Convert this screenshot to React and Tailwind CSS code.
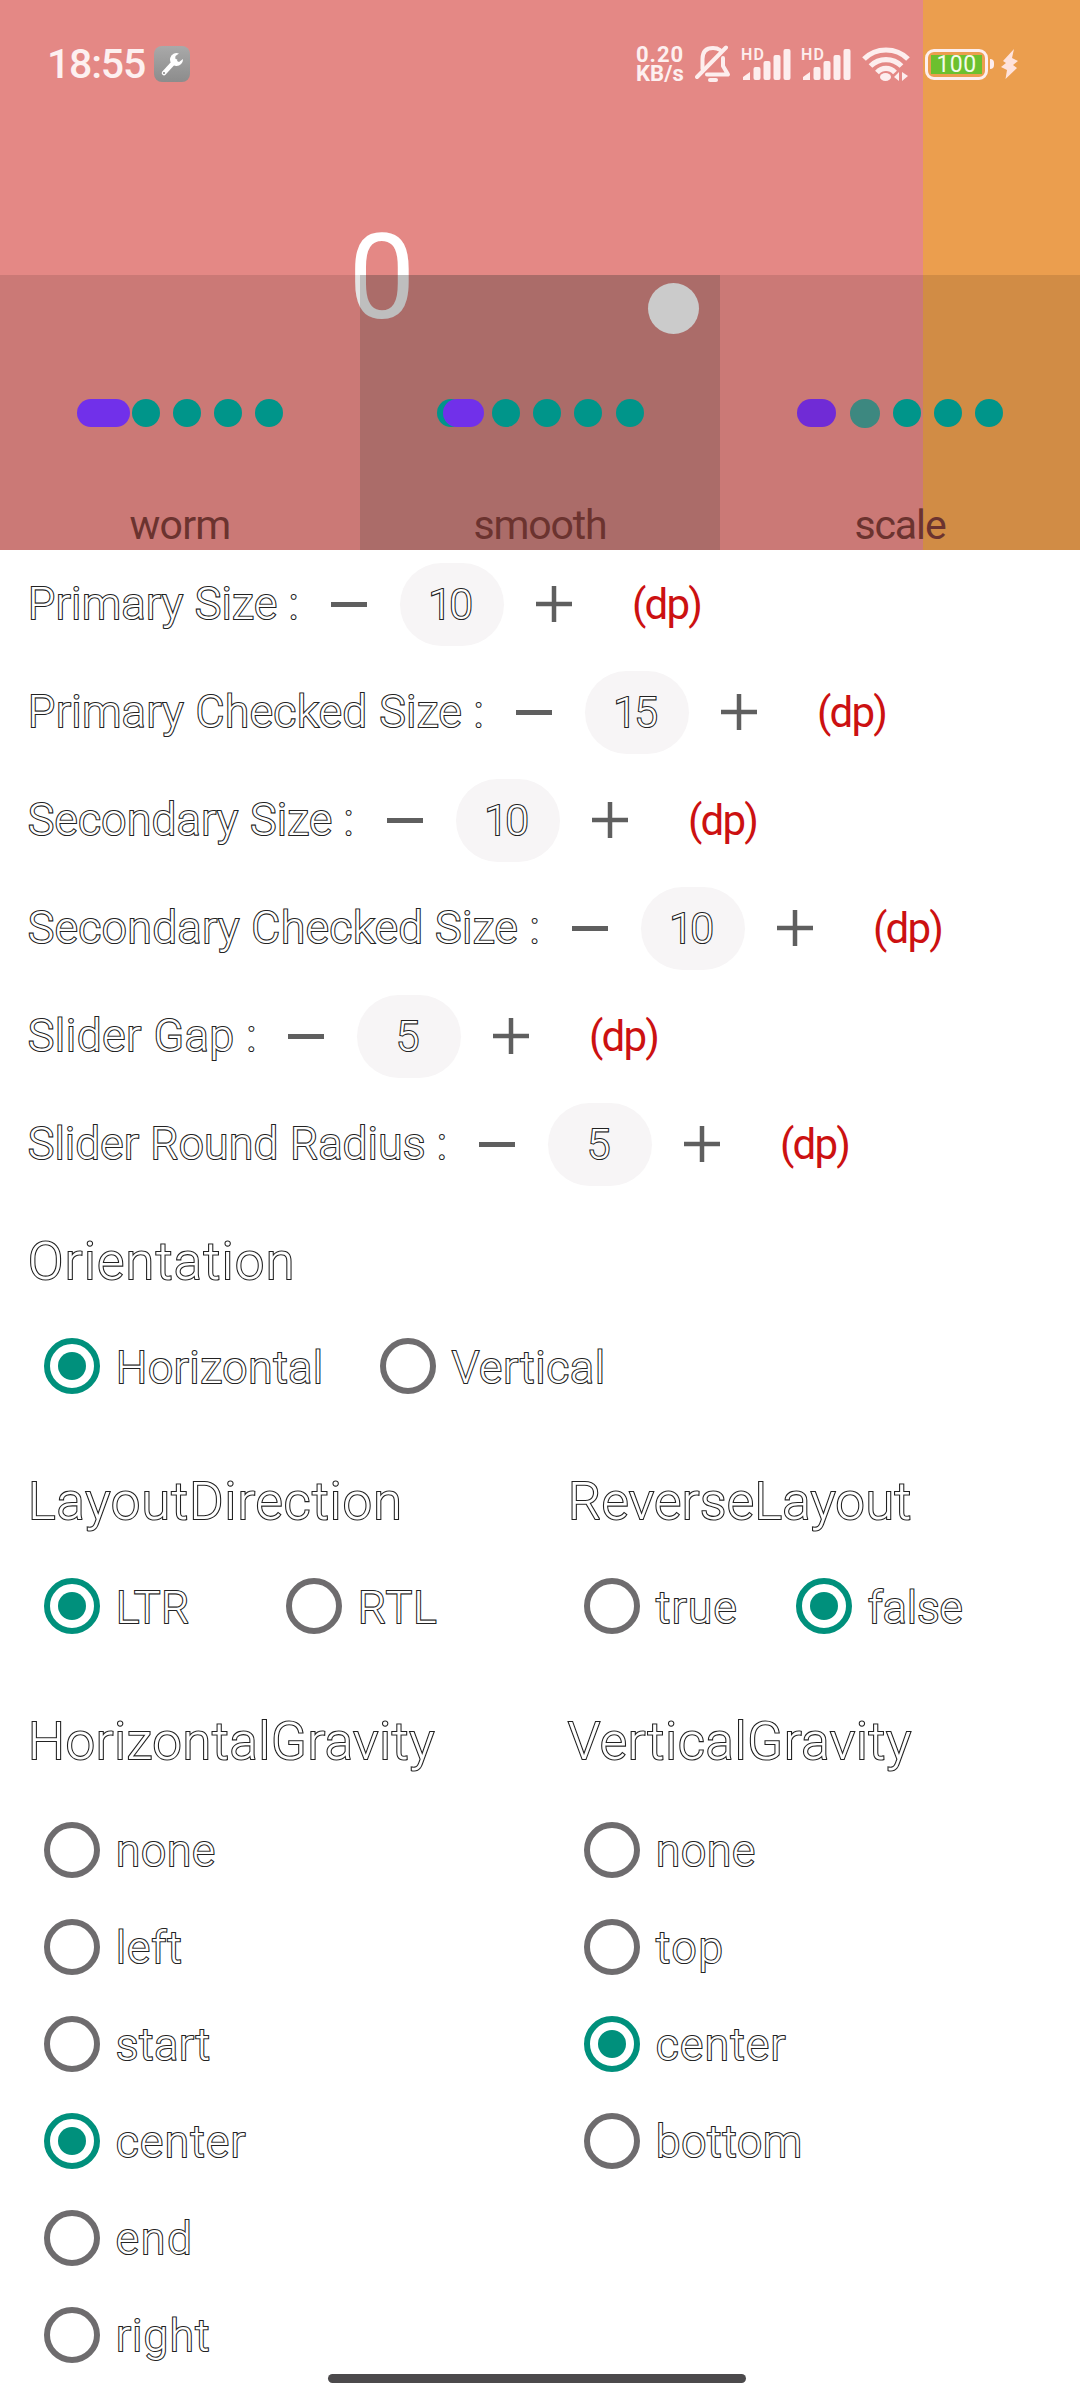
import { useLayoutEffect, useRef, useState } from "react";

// Text whose tracking is adjusted so that it fills the given width.
function Fit({ w, children, className = "" }) {
  const ref = useRef(null);
  const [ls, setLs] = useState(0);
  useLayoutEffect(() => {
    const natural = ref.current.getBoundingClientRect().width;
    setLs((w - natural) / children.length);
  }, []);
  return (
    <span ref={ref} className={`inline-block shrink-0 whitespace-nowrap ${className}`} style={{ letterSpacing: `${ls}px` }}>
      {children}
    </span>
  );
}

const outlined = "font-light text-white [-webkit-text-stroke:2.2px_#222] [paint-order:stroke_fill]";

function Dot({ className = "" }) {
  return <span className={`h-7 w-7 shrink-0 rounded-full bg-[#00958a] ${className}`} />;
}

function Preview({ name, w, shade, children }) {
  return (
    <div className={`relative h-full w-[360px] ${shade}`}>
      <div className="absolute left-[77px] top-[124px] flex h-7 items-center">{children}</div>
      <div className="absolute inset-x-0 bottom-0 flex h-[49px] items-center justify-center text-[41px] text-[#6b332f]">
        <Fit w={w}>{name}</Fit>
      </div>
    </div>
  );
}

function Signal() {
  return (
    <svg width="52" height="36" viewBox="0 0 52 36" fill="#fdeeee">
      <text x="0" y="14" fontSize="16" fontWeight="600" fontFamily="Roboto, sans-serif" textLength="23">HD</text>
      <path d="M2 34 V31 L9 26 V34 Z" />
      <rect x="12.500" y="21" width="7" height="13" rx="2" />
      <rect x="22.500" y="15" width="7" height="19" rx="2" />
      <rect x="32.500" y="9" width="7" height="25" rx="2" />
      <rect x="42.500" y="3" width="7" height="31" rx="2" />
    </svg>
  );
}

function StatusBar() {
  return (
    <div className="absolute inset-x-0 top-[46px] flex h-9 items-center text-[#fdf0f0]">
      <span className="ml-[47px] w-[107px] text-[41px] font-medium leading-9">
        <Fit w={98}>18:55</Fit>
      </span>
      <span className="flex h-9 w-9 items-center justify-center rounded-[8px] bg-gradient-to-b from-[#a9a9a9] to-[#8c8c8c]">
        <svg width="26" height="26" viewBox="0 0 26 26">
          <path d="M5 22 L16 10" stroke="#fff" strokeWidth="4.500" strokeLinecap="round" />
          <path d="M20 2.500 A6.500 6.500 0 1 0 24 8 L20 11 L16 9 L16.500 5 Z" fill="#fff" />
          <circle cx="5" cy="22" r="1.100" fill="#8c8c8c" />
        </svg>
      </span>
      <span className="ml-[446px] flex w-[59px] flex-col items-start text-[22px] font-bold leading-[18px]">
        <Fit w={48} className="h-[19px] leading-[17px]">0.20</Fit>
        <Fit w={48} className="h-[18px] leading-[18px]">KB/s</Fit>
      </span>
      <svg width="36" height="38" viewBox="0 0 36 38" fill="none" stroke="#fdeeee" strokeWidth="4" strokeLinecap="round" strokeLinejoin="round">
        <path d="M2 32 L31 2.500" />
        <path d="M7.500 24 V14 C7.500 6 12 3 18 3 C21 3 23 3.500 25 5" />
        <path d="M28 13 V21 L33 29.500 H12" />
        <path d="M15 35 H21" />
      </svg>
      <span className="ml-2.5"><Signal /></span>
      <span className="ml-2"><Signal /></span>
      <svg className="ml-[9px]" width="48" height="36" viewBox="0 0 48 36" fill="none" stroke="#fdeeee" strokeWidth="5.200">
        <path d="M2 13 C14 1 34 1 46 13" />
        <path d="M8.500 20 C17 11.500 31 11.500 39.500 20" />
        <path d="M15 26.500 C20 21 28 21 33 26.500" />
        <ellipse cx="23.500" cy="31" rx="5.500" ry="4" fill="#fdeeee" stroke="none" />
        <path d="M37 26 V35 L32 31 Z M40 26 V35 L46 30 Z" fill="#fdeeee" stroke="none" />
      </svg>
      <span className="ml-[15px] flex h-[31px] w-[63px] shrink-0 items-center justify-center rounded-[9px] border-[3px] border-[#fdeeee]">
        <span className="flex h-[19px] w-[51px] items-center justify-center bg-[#6cc02e] text-[23px] leading-none text-[#f3fbea]">
          <Fit w={40}>100</Fit>
        </span>
      </span>
      <span className="ml-[2px] h-2.5 w-1 shrink-0 rounded-r bg-[#fdeeee]" />
      <svg className="ml-[7px] shrink-0" width="18" height="32" viewBox="0 0 18 32" fill="#ffe3dc">
        <path d="M13 1 L2 13 L5 15 L0 19 L6 22 L4.500 31 L16 20 L12 17 L17 13 L11 10 Z" />
      </svg>
    </div>
  );
}

function Header() {
  return (
    <header className="relative flex h-[550px] overflow-hidden">
      <div className="h-full w-[923px] bg-[#e48885]" />
      <div className="h-full flex-1 bg-[#eb9e4e]" />
      <div className="absolute left-[342px] top-[218px] flex w-[80px] justify-center text-[119px] leading-[119px] text-white">
        0
      </div>
      <div className="absolute inset-x-0 bottom-0 flex h-[275px]">
        <Preview name="worm" w={101} shade="bg-black/11">
          <span className="h-7 w-[53px] rounded-full bg-[#7130ea]" />
          <Dot className="ml-[2px]" />
          <Dot className="ml-[13px]" />
          <Dot className="ml-[13px]" />
          <Dot className="ml-[13px]" />
        </Preview>
        <Preview name="smooth" w={133} shade="bg-[#2d2d2d]/31">
          <Dot />
          <span className="relative -ml-[22px] h-7 w-[41px] rounded-full bg-[#7130ea]" />
          <Dot className="ml-[8px]" />
          <Dot className="ml-[13px]" />
          <Dot className="ml-[13px]" />
          <Dot className="ml-[14px]" />
        </Preview>
        <Preview name="scale" w={91} shade="bg-black/11">
          <span className="h-7 w-[39px] rounded-full bg-[#702bd6]" />
          <span className="ml-[14px] h-[29px] w-[30px] rounded-full bg-[#3d8880]" />
          <Dot className="ml-[13px]" />
          <Dot className="ml-[13px]" />
          <Dot className="ml-[13px]" />
        </Preview>
      </div>
      <div className="absolute left-[648px] top-[283px] h-[51px] w-[51px] rounded-full bg-[#cbcbcb]" />
      <StatusBar />
    </header>
  );
}

const steppers = [
  { label: "Primary Size :", w: 271, gap: "w-[303px]", value: "10" },
  { label: "Primary Checked Size :", w: 456, gap: "w-[488px]", value: "15" },
  { label: "Secondary Size :", w: 326, gap: "w-[359px]", value: "10" },
  { label: "Secondary Checked Size :", w: 512, gap: "w-[544px]", value: "10" },
  { label: "Slider Gap :", w: 229, gap: "w-[260px]", value: "5" },
  { label: "Slider Round Radius :", w: 419, gap: "w-[451px]", value: "5" },
];

function Stepper({ label, w, gap, value }) {
  return (
    <div className="flex h-[108px] items-center pl-[28px] text-[44px]">
      <span className={gap}>
        <Fit w={w} className={outlined}>{label}</Fit>
      </span>
      <span className="h-[5px] w-9 bg-[#5f5f5f]" />
      <span className={`ml-[33px] flex h-[83px] w-[104px] items-center justify-center rounded-full bg-[#f7f5f6] pr-[5px] text-[42px] ${outlined}`}>
        <Fit w={value.length === 2 ? 42 : 21}>{value}</Fit>
      </span>
      <svg className="ml-[31px]" width="38" height="38" viewBox="0 0 38 38" stroke="#5f5f5f" strokeWidth="4.500">
        <path d="M1 19 H37 M19 1 V37" />
      </svg>
      <Fit w={69} className="ml-[59px] pt-px text-[42px] text-[#cc1111]">(dp)</Fit>
    </div>
  );
}

function Radio({ label, w, checked, className = "" }) {
  return (
    <div className={`flex items-center text-[44px] ${className}`}>
      <span className={`flex h-[56px] w-[56px] shrink-0 items-center justify-center rounded-full border-[6px] ${checked ? "border-[#00907c]" : "border-[#6e6c6e]"}`}>
        {checked && <span className="h-[28px] w-[28px] rounded-full bg-[#00907c]" />}
      </span>
      <Fit w={w} className={`ml-[16px] pt-[3px] ${outlined}`}>{label}</Fit>
    </div>
  );
}

function Heading({ w, children, className = "h-[126px]" }) {
  return (
    <h2 className={`flex items-center pt-0.5 text-[52px] ${className}`}>
      <Fit w={w} className={outlined}>{children}</Fit>
    </h2>
  );
}

const horizontal = [
  { label: "none", w: 100 },
  { label: "left", w: 67 },
  { label: "start", w: 95 },
  { label: "center", w: 131, checked: true },
  { label: "end", w: 78 },
  { label: "right", w: 95 },
];
const vertical = [
  { label: "none", w: 100 },
  { label: "top", w: 69 },
  { label: "center", w: 131, checked: true },
  { label: "bottom", w: 147 },
];

export default function App() {
  return (
    <div className="relative h-[2400px] w-[1080px] overflow-hidden bg-white font-['Roboto','Noto_Sans',sans-serif]">
      <Header />
      <main>
        {steppers.map((s) => (
          <Stepper key={s.label} {...s} />
        ))}
        <section className="pl-[28px]">
          <Heading w={268}>Orientation</Heading>
          <div className="flex h-[84px] pl-4">
            <Radio className="w-[336px]" label="Horizontal" w={208} checked />
            <Radio label="Vertical" w={154} />
          </div>
        </section>
        <div className="mt-[30px] flex">
          <section className="w-[540px] pl-[28px]">
            <Heading w={375}>LayoutDirection</Heading>
            <div className="flex h-[84px] pl-4">
              <Radio className="w-[242px]" label="LTR" w={74} checked />
              <Radio label="RTL" w={80} />
            </div>
          </section>
          <section className="w-[540px] pl-[28px]">
            <Heading w={344}>ReverseLayout</Heading>
            <div className="flex h-[84px] pl-4">
              <Radio className="w-[212px]" label="true" w={82} />
              <Radio label="false" w={95} checked />
            </div>
          </section>
        </div>
        <div className="mt-8 flex">
          <section className="w-[540px] pl-[28px]">
            <Heading w={407} className="h-[121px]">HorizontalGravity</Heading>
            {horizontal.map((o) => (
              <Radio key={o.label} className="h-[97px] pl-4" {...o} />
            ))}
          </section>
          <section className="w-[540px] pl-[28px]">
            <Heading w={344} className="h-[121px]">VerticalGravity</Heading>
            {vertical.map((o) => (
              <Radio key={o.label} className="h-[97px] pl-4" {...o} />
            ))}
          </section>
        </div>
      </main>
      <div className="absolute bottom-[17px] left-[328px] h-[9px] w-[418px] rounded-full bg-[#4c4a4c]" />
    </div>
  );
}
